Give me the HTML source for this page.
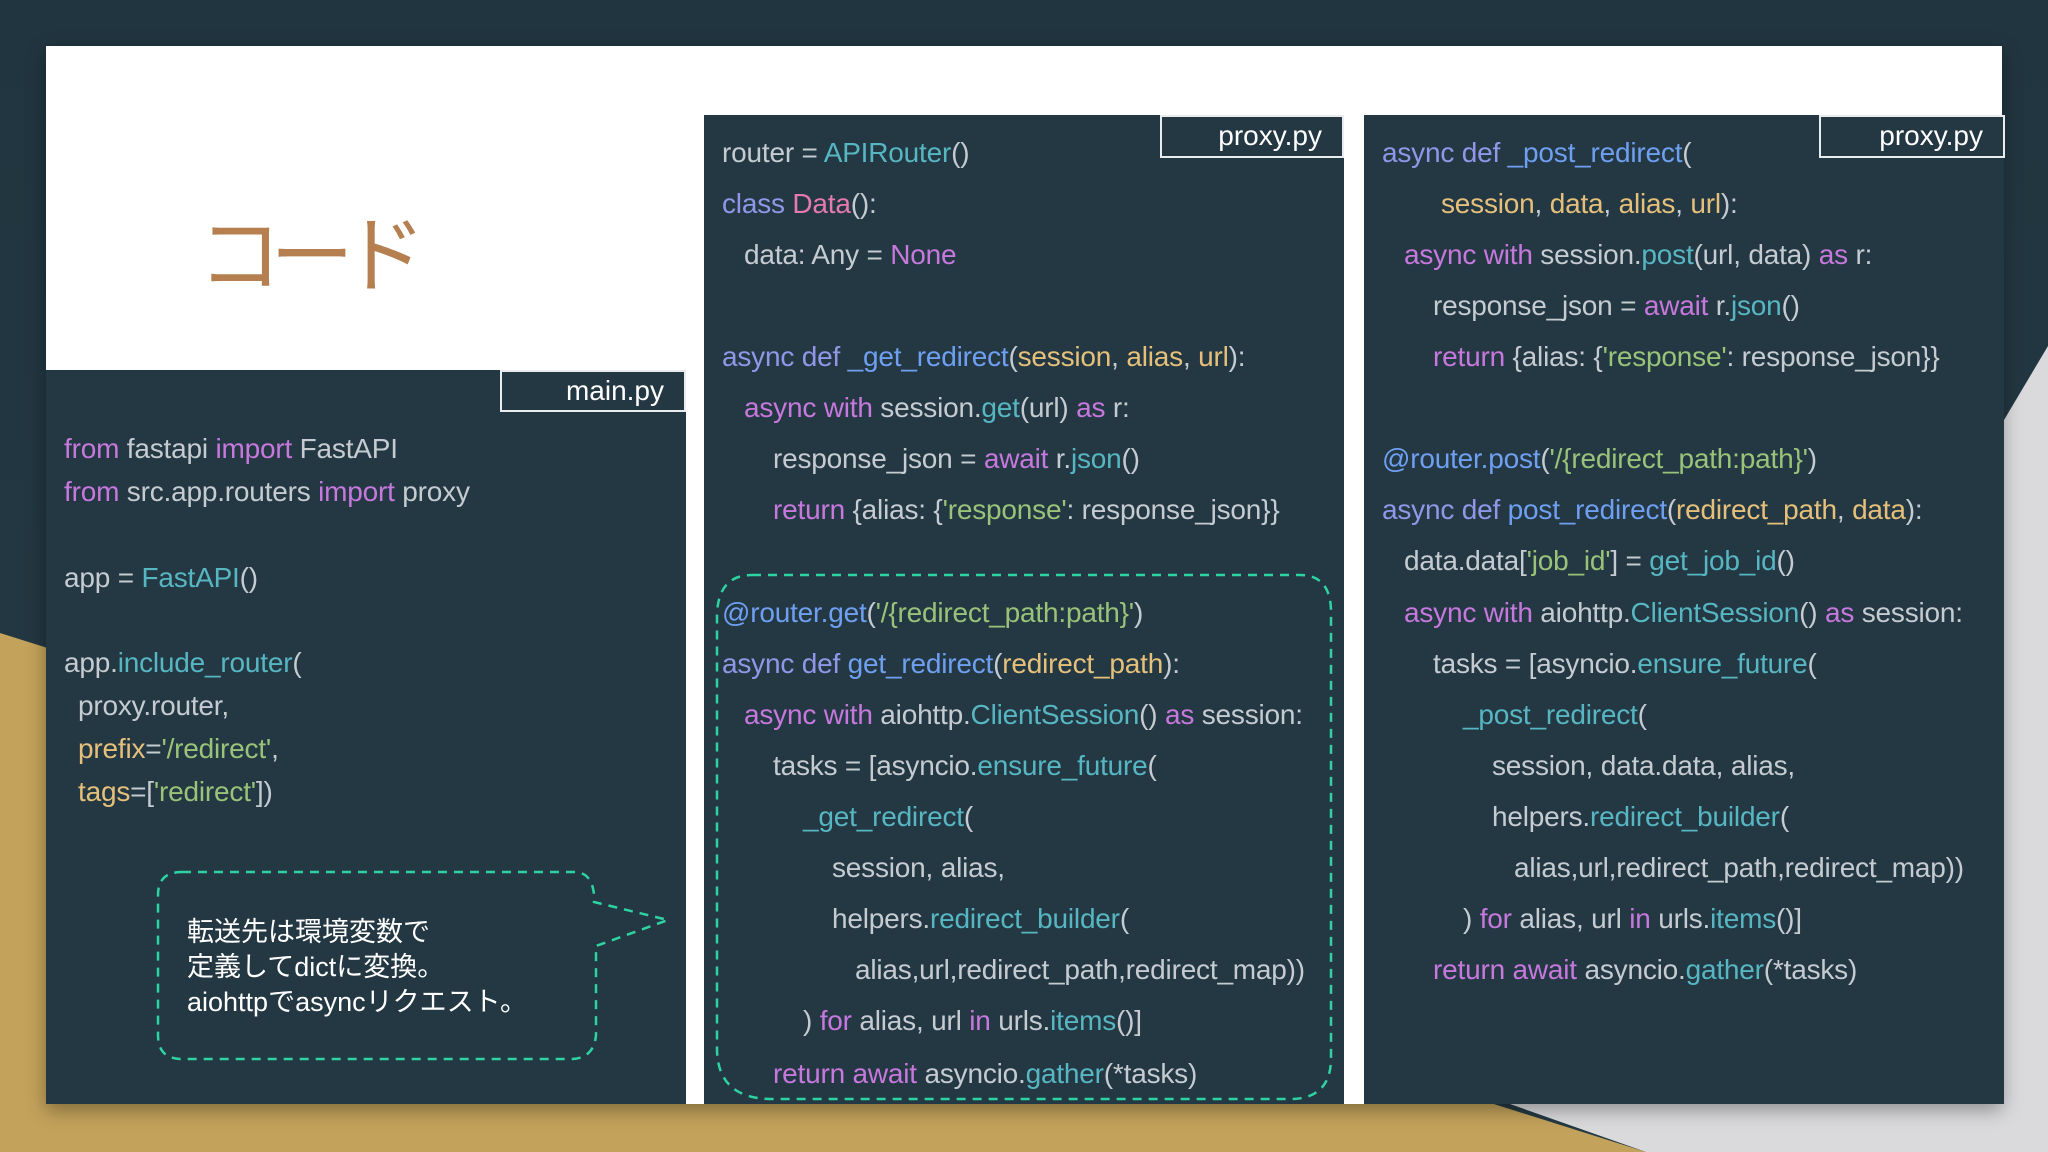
<!DOCTYPE html>
<html style="width:2048px;height:1152px;overflow:hidden"><head><meta charset="utf-8"><style>
*{margin:0;padding:0;box-sizing:border-box}
body{width:2048px;height:1152px;overflow:hidden;background:#22363f;font-family:"Liberation Sans","Noto Sans CJK JP",sans-serif}
#w{position:relative;width:2048px;height:1152px;overflow:hidden}
.abs{position:absolute}
.panel{position:absolute;background:#243843}
.tab{position:absolute;background:#243843;border:2px solid #e8ecef;color:#fff;font-size:28px;text-align:right;padding-right:20px;line-height:38px}
.code{position:absolute;left:0;top:0;width:2048px;height:1152px;font-size:28px;color:#c5cbd1;white-space:pre;letter-spacing:-0.2px}
.code div{position:absolute;height:51px;line-height:51px}
.k{color:#c678dd}.f{color:#56b6c2}.d{color:#8f98e8}.n{color:#6f9ff0}.p{color:#e5c07b}.s{color:#98c379}.c{color:#e57aae}
</style></head><body><div id="w">
<svg class="abs" style="left:0;top:0" width="2048" height="1152">
<defs><linearGradient id="g" x1="0" y1="0" x2="0" y2="1"><stop offset="0" stop-color="#213540"/><stop offset="1" stop-color="#243943"/></linearGradient></defs>
<rect width="2048" height="1152" fill="url(#g)"/>
<polygon points="0,633 1646,1152 0,1152" fill="#c3a25b"/>
<polygon points="2048,346 2048,1152 1646,1152 1510,1104 2004,420" fill="#dadadd"/>
</svg>
<div class="abs" style="left:46px;top:46px;width:1956px;height:1058px;background:#fff;box-shadow:0 6px 18px rgba(0,0,0,.35)"></div>
<div class="abs" style="left:198px;top:200px;font-size:84px;line-height:100px;color:#b57f50;font-family:'Noto Sans CJK JP',sans-serif;letter-spacing:-12px">コード</div>

<div class="panel" style="left:46px;top:370px;width:640px;height:734px"></div>
<div class="panel" style="left:704px;top:115px;width:640px;height:989px"></div>
<div class="panel" style="left:1364px;top:115px;width:640px;height:989px"></div>
<div class="tab" style="left:500px;top:370px;width:186px;height:42px">main.py</div>
<div class="tab" style="left:1160px;top:115px;width:184px;height:43px">proxy.py</div>
<div class="tab" style="left:1819px;top:115px;width:186px;height:43px">proxy.py</div>

<svg class="abs" style="left:0;top:0" width="2048" height="1152" fill="none" stroke="#2ed3a2" stroke-width="2.5" stroke-dasharray="9,7">
<path d="M752,575 H1300 Q1330,575 1331,610 V1060 Q1330,1098 1292,1099 H770 Q718,1098 717,1050 V615 Q718,575 752,575 Z"/>
<path d="M182,872 H574 Q592,872 594,895 V902 L668,920 L596,946 V1035 Q594,1058 572,1059 H180 Q158,1058 158,1035 V895 Q158,872 182,872 Z"/>
</svg>
<div class="abs" style="left:187px;top:915px;font-size:27px;line-height:35px;color:#fff">転送先は環境変数で<br>定義してdictに変換。<br>aiohttpでasyncリクエスト。</div>

<div class="code">
<div style="left:64px;top:423px"><span class="k">from</span> fastapi <span class="k">import</span> FastAPI</div>
<div style="left:64px;top:466px"><span class="k">from</span> src.app.routers <span class="k">import</span> proxy</div>
<div style="left:64px;top:552px">app = <span class="f">FastAPI</span>()</div>
<div style="left:64px;top:637px">app.<span class="f">include_router</span>(</div>
<div style="left:78px;top:680px">proxy.router,</div>
<div style="left:78px;top:723px"><span class="p">prefix</span>=<span class="s">'/redirect'</span>,</div>
<div style="left:78px;top:766px"><span class="p">tags</span>=[<span class="s">'redirect'</span>])</div>

<div style="left:722px;top:127px">router = <span class="f">APIRouter</span>()</div>
<div style="left:722px;top:178px"><span class="d">class</span> <span class="c">Data</span>():</div>
<div style="left:744px;top:229px">data: Any = <span class="k">None</span></div>
<div style="left:722px;top:331px"><span class="d">async def</span> <span class="n">_get_redirect</span>(<span class="p">session</span>, <span class="p">alias</span>, <span class="p">url</span>):</div>
<div style="left:744px;top:382px"><span class="k">async with</span> session.<span class="f">get</span>(url) <span class="k">as</span> r:</div>
<div style="left:773px;top:433px">response_json = <span class="k">await</span> r.<span class="f">json</span>()</div>
<div style="left:773px;top:484px"><span class="k">return</span> {alias: {<span class="s">'response'</span>: response_json}}</div>
<div style="left:722px;top:587px"><span class="n">@router.get</span>(<span class="s">'/{redirect_path:path}'</span>)</div>
<div style="left:722px;top:638px"><span class="d">async def</span> <span class="n">get_redirect</span>(<span class="p">redirect_path</span>):</div>
<div style="left:744px;top:689px"><span class="k">async with</span> aiohttp.<span class="f">ClientSession</span>() <span class="k">as</span> session:</div>
<div style="left:773px;top:740px">tasks = [asyncio.<span class="f">ensure_future</span>(</div>
<div style="left:803px;top:791px"><span class="f">_get_redirect</span>(</div>
<div style="left:832px;top:842px">session, alias,</div>
<div style="left:832px;top:893px">helpers.<span class="f">redirect_builder</span>(</div>
<div style="left:855px;top:944px">alias,url,redirect_path,redirect_map))</div>
<div style="left:803px;top:995px">) <span class="k">for</span> alias, url <span class="k">in</span> urls.<span class="f">items</span>()]</div>
<div style="left:773px;top:1048px"><span class="k">return await</span> asyncio.<span class="f">gather</span>(*tasks)</div>

<div style="left:1382px;top:127px"><span class="d">async def</span> <span class="n">_post_redirect</span>(</div>
<div style="left:1441px;top:178px"><span class="p">session</span>, <span class="p">data</span>, <span class="p">alias</span>, <span class="p">url</span>):</div>
<div style="left:1404px;top:229px"><span class="k">async with</span> session.<span class="f">post</span>(url, data) <span class="k">as</span> r:</div>
<div style="left:1433px;top:280px">response_json = <span class="k">await</span> r.<span class="f">json</span>()</div>
<div style="left:1433px;top:331px"><span class="k">return</span> {alias: {<span class="s">'response'</span>: response_json}}</div>
<div style="left:1382px;top:433px"><span class="n">@router.post</span>(<span class="s">'/{redirect_path:path}'</span>)</div>
<div style="left:1382px;top:484px"><span class="d">async def</span> <span class="n">post_redirect</span>(<span class="p">redirect_path</span>, <span class="p">data</span>):</div>
<div style="left:1404px;top:535px">data.data[<span class="s">'job_id'</span>] = <span class="f">get_job_id</span>()</div>
<div style="left:1404px;top:587px"><span class="k">async with</span> aiohttp.<span class="f">ClientSession</span>() <span class="k">as</span> session:</div>
<div style="left:1433px;top:638px">tasks = [asyncio.<span class="f">ensure_future</span>(</div>
<div style="left:1463px;top:689px"><span class="f">_post_redirect</span>(</div>
<div style="left:1492px;top:740px">session, data.data, alias,</div>
<div style="left:1492px;top:791px">helpers.<span class="f">redirect_builder</span>(</div>
<div style="left:1514px;top:842px">alias,url,redirect_path,redirect_map))</div>
<div style="left:1463px;top:893px">) <span class="k">for</span> alias, url <span class="k">in</span> urls.<span class="f">items</span>()]</div>
<div style="left:1433px;top:944px"><span class="k">return await</span> asyncio.<span class="f">gather</span>(*tasks)</div>
</div>
</div></body></html>
